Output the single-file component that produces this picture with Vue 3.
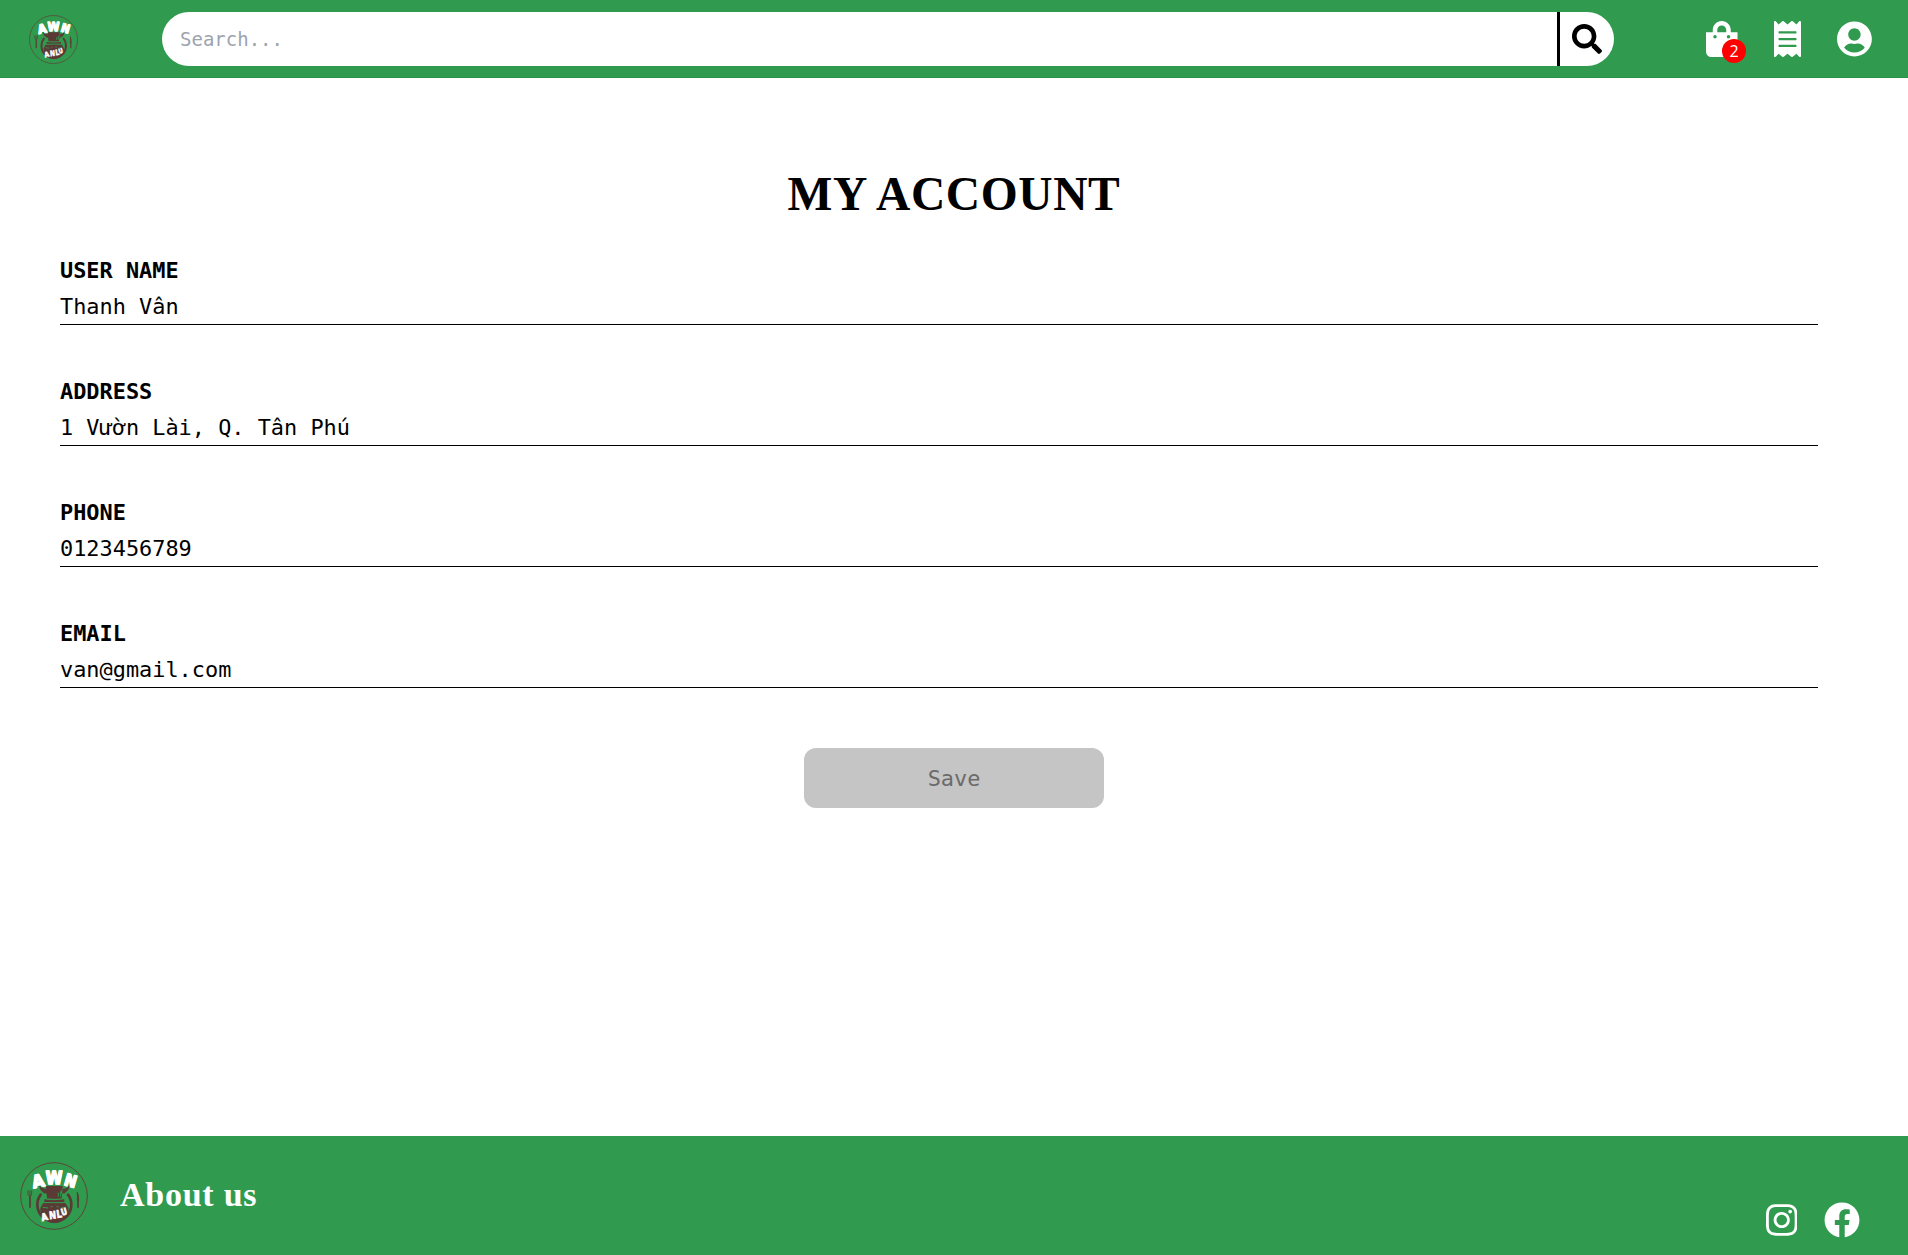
<script setup>
import { h } from 'vue'

const fields = [
  { label: 'USER NAME', value: 'Thanh Vân' },
  { label: 'ADDRESS', value: '1 Vườn Lài, Q. Tân Phú' },
  { label: 'PHONE', value: '0123456789' },
  { label: 'EMAIL', value: 'van@gmail.com' },
]

const cartCount = 2

const icons = {
  search: ['0 0 512 512', 'M505 442.7L405.3 343c-4.5-4.5-10.6-7-17-7H372c27.6-35.3 44-79.7 44-128C416 93.1 322.9 0 208 0S0 93.1 0 208s93.1 208 208 208c48.3 0 92.7-16.4 128-44v16.3c0 6.4 2.5 12.5 7 17l99.7 99.7c9.4 9.4 24.6 9.4 33.9 0l28.3-28.3c9.4-9.4 9.4-24.6.1-34zM208 336c-70.7 0-128-57.2-128-128 0-70.7 57.2-128 128-128 70.7 0 128 57.2 128 128 0 70.7-57.2 128-128 128z'],
  bag: ['0 0 448 512', 'M352 160v-32C352 57.42 294.579 0 224 0 153.42 0 96 57.42 96 128v32H0v272c0 44.183 35.817 80 80 80h288c44.183 0 80-35.817 80-80V160h-96zm-192-32c0-35.29 28.71-64 64-64s64 28.71 64 64v32H160v-32zm160 120c-13.255 0-24-10.745-24-24s10.745-24 24-24 24 10.745 24 24-10.745 24-24 24zm-192 0c-13.255 0-24-10.745-24-24s10.745-24 24-24 24 10.745 24 24-10.745 24-24 24z'],
  receipt: ['0 0 384 512', 'M358.4 3.2L320 48 265.6 3.2a15.9 15.9 0 0 0-19.2 0L192 48 137.6 3.2a15.9 15.9 0 0 0-19.2 0L64 48 25.6 3.2C15-4.7 0 2.8 0 16v480c0 13.2 15 20.7 25.6 12.8L64 464l54.4 44.8a15.9 15.9 0 0 0 19.2 0L192 464l54.4 44.8a15.9 15.9 0 0 0 19.2 0L320 464l38.4 44.8c10.5 7.9 25.6.4 25.6-12.8V16c0-13.2-15-20.7-25.6-12.8zM320 360c0 4.4-3.6 8-8 8H72c-4.4 0-8-3.6-8-8v-16c0-4.4 3.6-8 8-8h240c4.4 0 8 3.6 8 8v16zm0-96c0 4.4-3.6 8-8 8H72c-4.4 0-8-3.6-8-8v-16c0-4.4 3.6-8 8-8h240c4.4 0 8 3.6 8 8v16zm0-96c0 4.4-3.6 8-8 8H72c-4.4 0-8-3.6-8-8v-16c0-4.4 3.6-8 8-8h240c4.4 0 8 3.6 8 8v16z'],
  user: ['0 0 496 512', 'M248 8C111 8 0 119 0 256s111 248 248 248 248-111 248-248S385 8 248 8zm0 96c48.6 0 88 39.4 88 88s-39.4 88-88 88-88-39.4-88-88 39.4-88 88-88zm0 344c-58.7 0-111.3-26.6-146.5-68.2 18.8-35.4 55.6-59.8 98.5-59.8 2.4 0 4.8.4 7.1 1.1 13 4.2 26.6 6.9 40.9 6.9 14.3 0 28-2.7 40.9-6.9 2.3-.7 4.7-1.1 7.1-1.1 42.9 0 79.7 24.4 98.5 59.8C359.3 421.4 306.7 448 248 448z'],
  instagram: ['0 0 448 512', 'M224.1 141c-63.6 0-114.9 51.3-114.9 114.9s51.3 114.9 114.9 114.9S339 319.5 339 255.9 287.7 141 224.1 141zm0 189.6c-41.1 0-74.7-33.5-74.7-74.7s33.5-74.7 74.7-74.7 74.7 33.5 74.7 74.7-33.6 74.7-74.7 74.7zm146.4-194.3c0 14.9-12 26.8-26.8 26.8-14.9 0-26.8-12-26.8-26.8s12-26.8 26.8-26.8 26.8 12 26.8 26.8zm76.1 27.2c-1.7-35.9-9.9-67.7-36.2-93.9-26.2-26.2-58-34.4-93.9-36.2-37-2.1-147.9-2.1-184.9 0-35.8 1.7-67.6 9.9-93.9 36.1s-34.4 58-36.2 93.9c-2.1 37-2.1 147.9 0 184.9 1.7 35.9 9.9 67.7 36.2 93.9s58 34.4 93.9 36.2c37 2.1 147.9 2.1 184.9 0 35.9-1.7 67.7-9.9 93.9-36.2 26.2-26.2 34.4-58 36.2-93.9 2.1-37 2.1-147.8 0-184.8zM398.8 388c-7.8 19.6-22.9 34.7-42.6 42.6-29.5 11.7-99.5 9-132.1 9s-102.7 2.6-132.1-9c-19.6-7.8-34.7-22.9-42.6-42.6-11.7-29.5-9-99.5-9-132.1s-2.6-102.7 9-132.1c7.8-19.6 22.9-34.7 42.6-42.6 29.5-11.7 99.5-9 132.1-9s102.7-2.6 132.1 9c19.6 7.8 34.7 22.9 42.6 42.6 11.7 29.5 9 99.5 9 132.1s2.7 102.7-9 132.1z'],
  facebook: ['0 0 512 512', 'M504 256C504 119 393 8 256 8S8 119 8 256c0 123.78 90.69 226.38 209.25 245V327.69h-63V256h63v-54.64c0-62.15 37-96.48 93.67-96.48 27.14 0 55.52 4.84 55.52 4.84v61h-31.28c-30.8 0-40.41 19.12-40.41 38.73V256h68.78l-11 71.69h-57.78V501C413.31 482.38 504 379.78 504 256z'],
}

const Icon = ({ name }) =>
  h('svg', { viewBox: icons[name][0], fill: 'currentColor', 'aria-hidden': 'true' }, [
    h('path', { d: icons[name][1] }),
  ])
Icon.props = ['name']

const letter = (char, x, y, size, angle, width, stroke = 4) =>
  h('text', {
    x: x - width / 2, y, 'font-size': size, transform: `rotate(${angle} ${x} ${y})`,
    textLength: width, lengthAdjust: 'spacingAndGlyphs',
    'font-family': '"DejaVu Sans", sans-serif', 'font-weight': 700,
    fill: '#fff', stroke: '#fff', 'stroke-width': stroke, 'stroke-linejoin': 'round',
  }, char)

// Restaurant badge: plate ring, cutlery, chef bull and the AWN / ANLU lettering
const Logo = () =>
  h('svg', { viewBox: '30 36 204 204', role: 'img', 'aria-label': 'AWN' }, [
    h('circle', { cx: 132, cy: 138, r: 100, fill: 'none', stroke: '#5c4438', 'stroke-width': 3 }),
    h('g', { fill: 'none', stroke: '#5b3a36', 'stroke-linecap': 'round' }, [
      h('path', { d: 'M54 122v10q0 6 5.500 6t5.500-6v-10M59.500 122v14', 'stroke-width': 2.500 }),
      h('path', { d: 'M60 140v32M204 150v22', 'stroke-width': 5 }),
      h('path', { d: 'M202 150v-24q5 12 4 24z', 'stroke-width': 2.500, fill: '#5b3a36' }),
      h('path', { d: 'M92 134a51 51 0 1 0 82 0', 'stroke-width': 8 }),
    ]),
    h('g', { fill: '#5b3a36', stroke: '#5b3a36', 'stroke-width': 9 }, [
      letter('A', 88, 111, 52, -12, 36), letter('W', 132, 102, 52, 0, 50), letter('N', 177, 109, 50, 16, 36),
    ]),
    h('path', { fill: '#5b3a36', d: 'M88 106q8 12 22 10l4 14q-14 2-16-4-10-6-10-20zM178 106q-8 12-22 10l-4 14q14 2 16-4 10-6 10-20zM108 108h50l-3 38h-44zM103 148h60v8h-60zM99 160q34-6 68 0l8 14q6 36-41 46-46-8-43-46z' }),
    h('path', { fill: 'none', stroke: '#309b4e', 'stroke-width': 3, d: 'M108 147q25 4 49 0M145 128v12M152 124v16M104 158h56M98 172l16 2M168 172l-16 2M122 170h6M140 170h6' }),
    letter('A', 88, 111, 52, -12, 36),
    letter('W', 132, 102, 52, 0, 50),
    letter('N', 177, 109, 50, 16, 36),
    letter('A', 106, 211, 30, -14, 20, 2),
    letter('N', 129, 207, 32, -6, 21, 2),
    letter('L', 149, 203, 32, -8, 16, 2),
    letter('U', 165, 195, 28, -16, 18, 2),
  ])
</script>

<template>
  <div class="page">
    <header class="topbar">
      <Logo class="logo" />
      <form class="search" @submit.prevent>
        <input type="text" placeholder="Search..." aria-label="Search" />
        <button type="submit" aria-label="Search"><Icon name="search" /></button>
      </form>
      <nav class="actions">
        <a class="cart"><Icon name="bag" /><span class="badge">{{ cartCount }}</span></a>
        <a><Icon name="receipt" /></a>
        <a><Icon name="user" /></a>
      </nav>
    </header>

    <main>
      <h1>MY ACCOUNT</h1>
      <div v-for="field in fields" :key="field.label" class="field">
        <span class="label">{{ field.label }}</span>
        <span class="value">{{ field.value }}</span>
      </div>
      <button class="save" disabled>Save</button>
    </main>

    <footer>
      <Logo class="logo" />
      <h2>About us</h2>
      <div class="social">
        <Icon name="instagram" />
        <Icon name="facebook" />
      </div>
    </footer>
  </div>
</template>

<style>
body {
  margin: 0;
}
</style>

<style scoped>
.page {
  display: flex;
  flex-direction: column;
  height: 1255px;
  background: #fff;
  color: #000;
  font-family: "DejaVu Sans Mono", monospace;
}
.page * {
  box-sizing: border-box;
}
svg {
  display: block;
}
.topbar {
  display: flex;
  align-items: center;
  flex: none;
  height: 78px;
  padding: 0 36px 0 29px;
  background: #309b4e;
  box-shadow: inset 0 -1px 0 #2b8f46;
}
.topbar .logo {
  width: 49px;
  height: 49px;
}
.search {
  display: flex;
  width: 1452px;
  height: 54px;
  margin-left: 84px;
  border-radius: 27px;
  background: #fff;
  overflow: hidden;
}
.search input {
  flex: 1;
  min-width: 0;
  padding: 0 18px;
  border: 0;
  outline: 0;
  background: none;
  font: 19px "DejaVu Sans Mono", monospace;
}
.search input::placeholder {
  color: #9ca3af;
  opacity: 1;
}
.search button {
  display: flex;
  align-items: center;
  width: 57px;
  padding: 0 0 0 12px;
  border: 0;
  border-left: 3px solid #000;
  background: none;
  color: #000;
}
.search svg {
  width: 30px;
  height: 30px;
}
.actions {
  display: flex;
  align-items: center;
  justify-content: space-between;
  width: 166px;
  margin-left: auto;
  color: #fff;
}
.actions svg {
  height: 36px;
}
.cart {
  position: relative;
}
.badge {
  position: absolute;
  left: 16px;
  top: 18px;
  width: 24px;
  height: 24px;
  border-radius: 50%;
  background: #f00;
  font: 16px/25px "Open Sans", sans-serif;
  text-align: center;
}
main {
  display: flex;
  flex-direction: column;
  flex: 1;
  padding: 80px 90px 0 60px;
}
h1 {
  margin: 0 -30px 23px 0;
  font: bold 47.5px/72px "Liberation Serif", serif;
  letter-spacing: 0.6px;
  text-align: center;
}
.field {
  display: flex;
  flex-direction: column;
  height: 72px;
  margin-bottom: 49px;
  border-bottom: 1px solid #000;
  font-size: 21.9px;
  line-height: 36px;
  white-space: pre;
}
.label {
  font-weight: bold;
}
.save {
  align-self: center;
  width: 300px;
  height: 60px;
  margin: 11px -30px 0 0;
  border: 0;
  border-radius: 12px;
  background: #c5c5c5;
  color: #6b6b6b;
  font: 21.9px "DejaVu Sans Mono", monospace;
}
footer {
  display: flex;
  align-items: center;
  flex: none;
  height: 119px;
  padding: 0 48px 0 20px;
  background: #309b4e;
  color: #fff;
}
footer .logo {
  width: 68px;
  height: 68px;
}
h2 {
  margin: 0 0 2px 32px;
  font: bold 34px/40px "Liberation Serif", serif;
  letter-spacing: 0.75px;
}
.social {
  display: flex;
  gap: 27px;
  align-self: flex-end;
  margin: 0 0 17px auto;
}
.social svg {
  height: 36px;
}
</style>
